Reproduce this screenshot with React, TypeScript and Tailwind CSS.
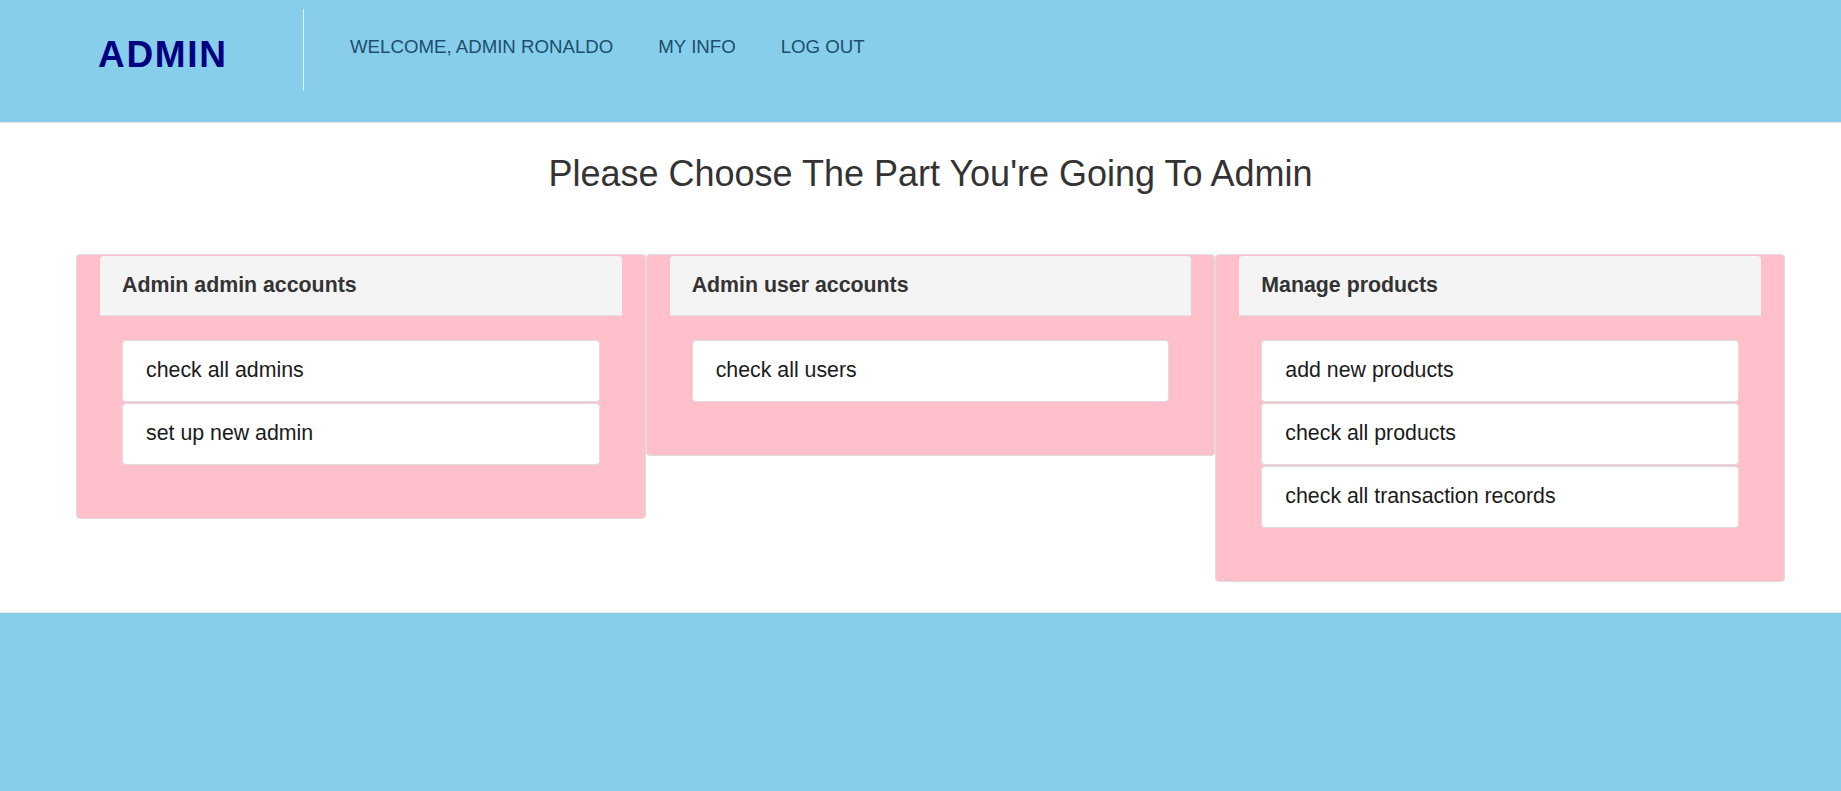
import React from "react";

const panels = [
  { title: "Admin admin accounts", items: ["check all admins", "set up new admin"] },
  { title: "Admin user accounts", items: ["check all users"] },
  {
    title: "Manage products",
    items: ["add new products", "check all products", "check all transaction records"],
  },
];

export default function App() {
  return (
    <div className="min-h-screen flex flex-col bg-white font-['Liberation_Sans',Arial,sans-serif]">
      <header className="h-[123px] bg-[#87ceeb] border-b border-[#e7e7e7] flex items-start shrink-0">
        <div className="w-[303px] pl-[98px] pt-[37px]">
          <span className="block text-[37px] leading-[36px] font-bold tracking-[0.045em] text-[#000080]">
            ADMIN
          </span>
        </div>
        <div className="mt-[9px] h-[82px] w-px bg-[#e3eef2]" />
        <nav className="ml-[46px] mt-[37px] flex gap-[45px] text-[18.67px] leading-[20px] text-[#1c4e6e]">
          <a>WELCOME, ADMIN RONALDO</a>
          <a>MY INFO</a>
          <a>LOG OUT</a>
        </nav>
      </header>

      <main className="pt-[31px] pb-[30px]">
        <div className="ml-[76px] w-[1709px]">
          <h1 className="text-center text-[36px] leading-[40px] text-[#333333] font-normal">
            Please Choose The Part You're Going To Admin
          </h1>
          <div className="mt-[60px] grid grid-cols-3 items-start">
            {panels.map((p) => (
              <div
                key={p.title}
                className="bg-[#ffc0cb] border border-[#dddddd] rounded-[4px] px-[23px] pt-[1px] pb-[53px]"
              >
                <div className="h-[60px] bg-[#f4f4f4] rounded-t-[4px] border-b border-[#e2e2e2] flex items-center pl-[22px]">
                  <span className="text-[21.33px] font-bold text-[#333333]">{p.title}</span>
                </div>
                <div className="mt-[24px] mx-[22px] flex flex-col gap-[1px]">
                  {p.items.map((it) => (
                    <div
                      key={it}
                      className="h-[62px] bg-white border border-[#dddddd] rounded-[4px] flex items-center pl-[23px] text-[21.33px] text-[#1a1a1a]"
                    >
                      {it}
                    </div>
                  ))}
                </div>
              </div>
            ))}
          </div>
        </div>
      </main>

      <footer className="flex-1 bg-[#87ceeb] border-t border-[#e7e7e7]" />
    </div>
  );
}
